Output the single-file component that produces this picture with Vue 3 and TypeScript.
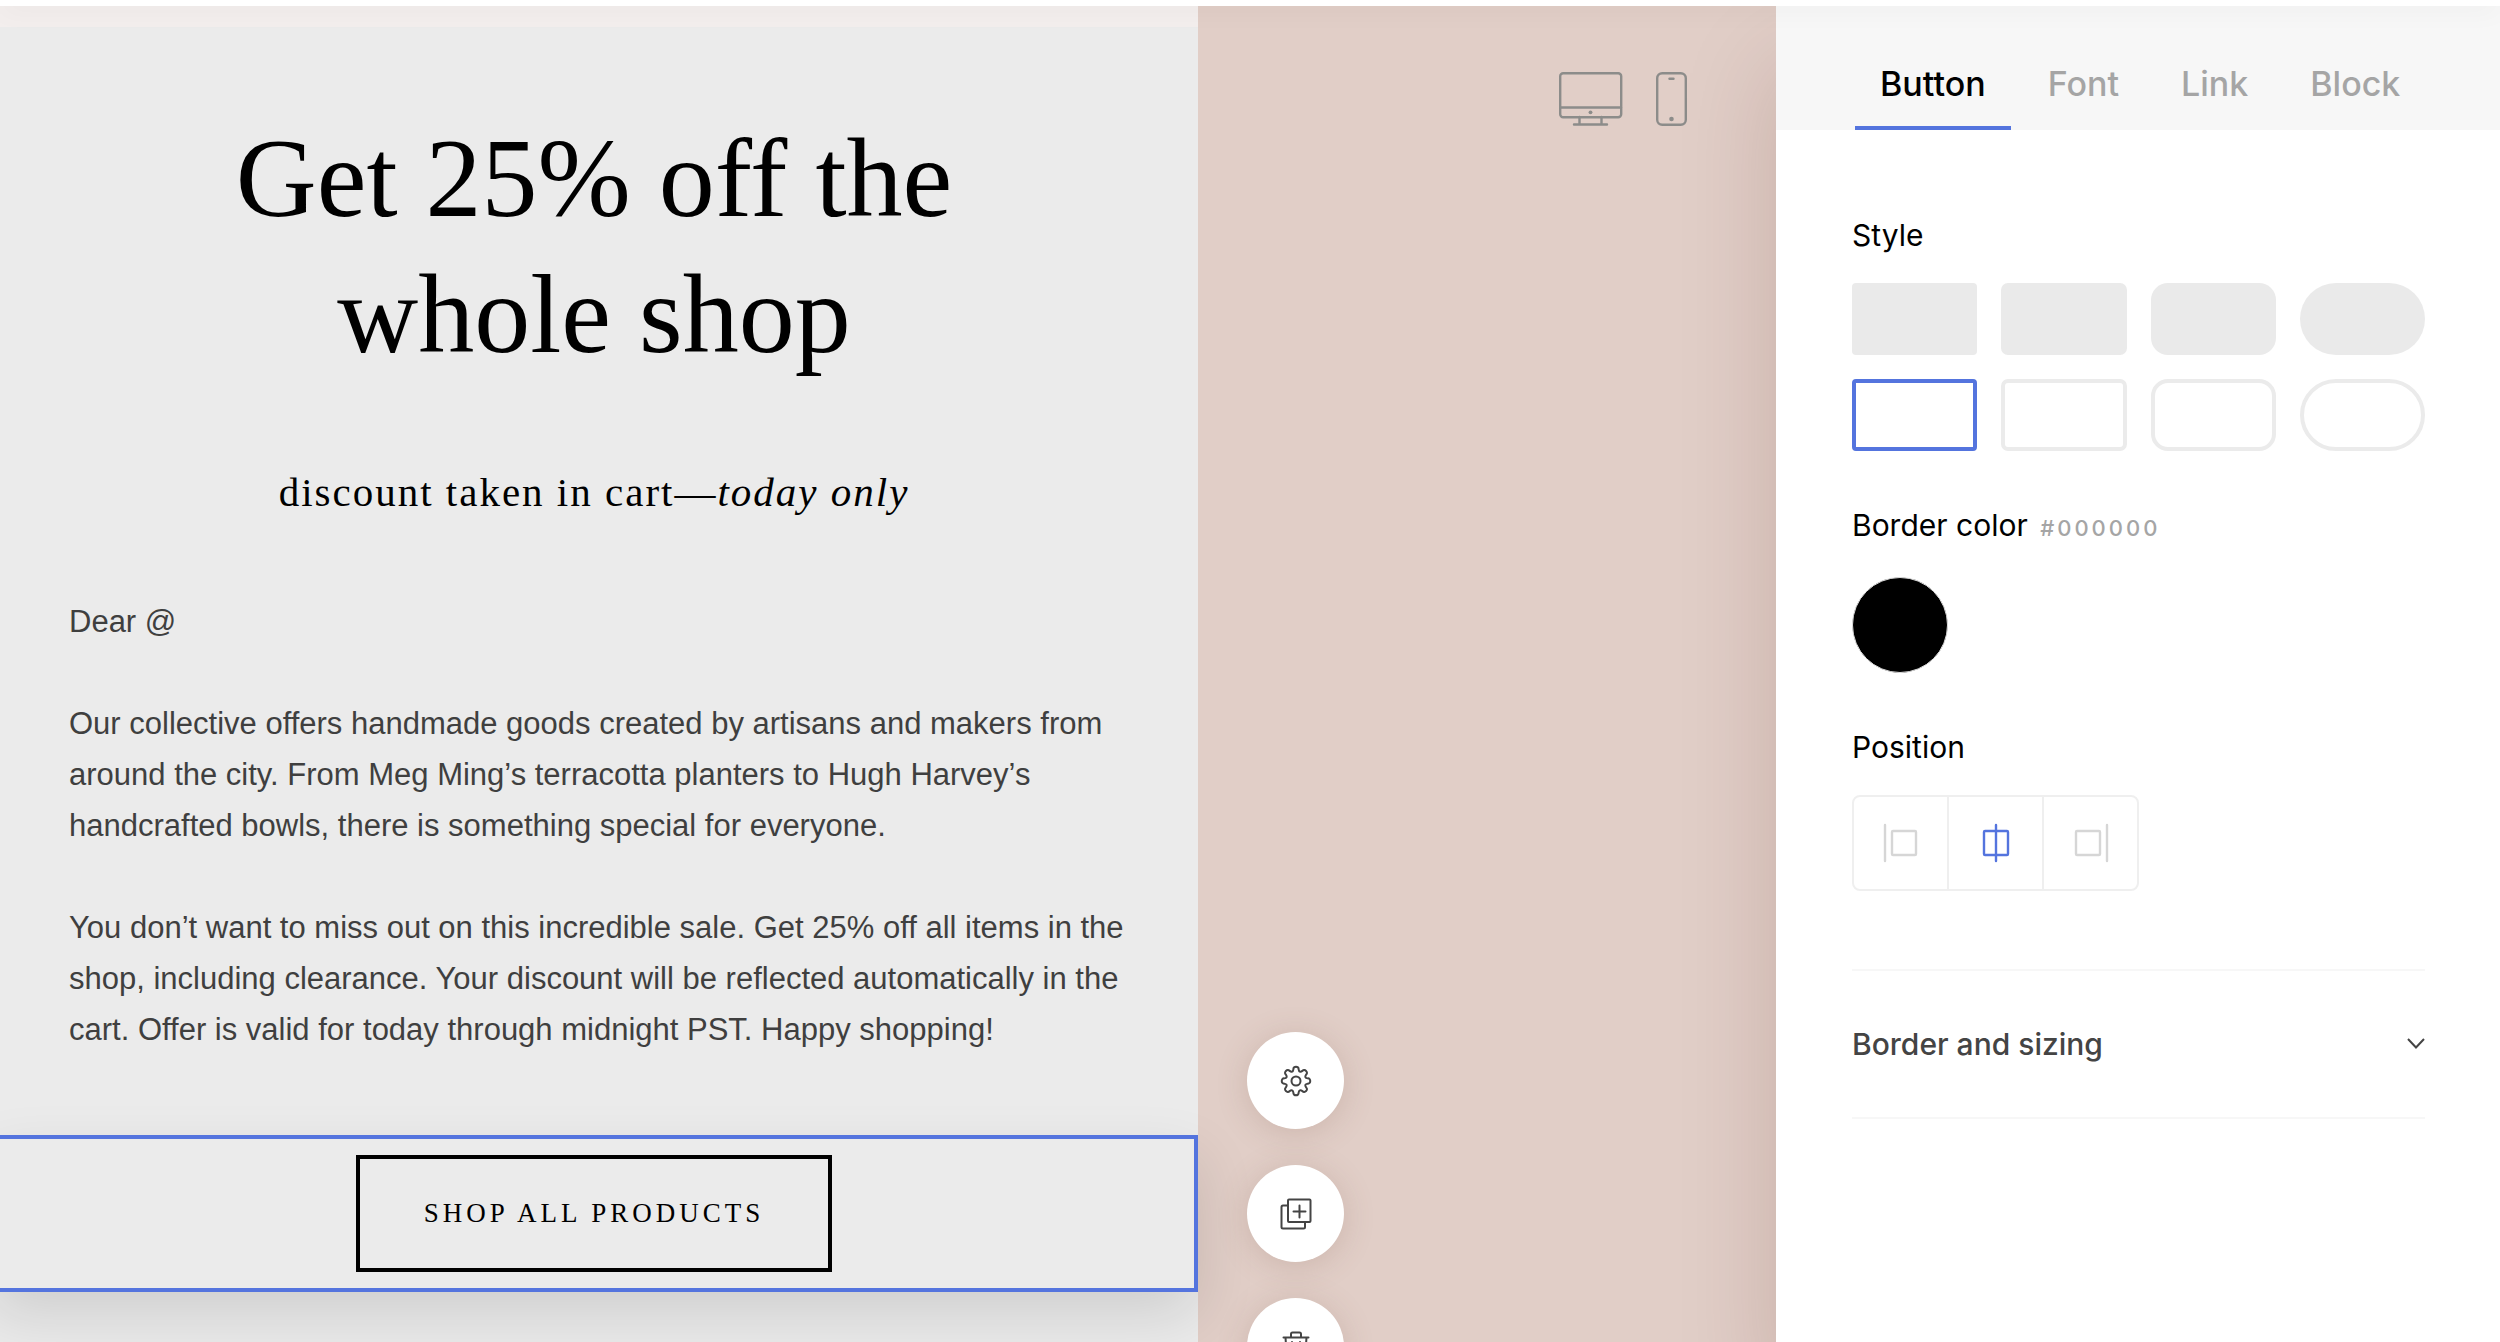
<script setup lang="ts">
import { ref } from 'vue'

const tabs = ['Button', 'Font', 'Link', 'Block']
const activeTab = ref('Button')

const shapes = ['square', 'soft', 'round', 'pill']
const styles = [
  ...shapes.map((shape) => ({ id: `filled-${shape}`, shape, kind: 'filled' })),
  ...shapes.map((shape) => ({ id: `outline-${shape}`, shape, kind: 'outline' })),
]
const activeStyle = ref('outline-square')

const positions = [
  { id: 'left', bar: 4, box: 11 },
  { id: 'center', bar: 20, box: 8 },
  { id: 'right', bar: 36, box: 5 },
]
const activePosition = ref('center')
const borderColor = ref('#000000')

const gearPath = (() => {
  const teeth = 8
  const parts: string[] = []
  const at = (radius: number, angle: number) =>
    `${(16 + radius * Math.cos(angle)).toFixed(2)} ${(16 + radius * Math.sin(angle)).toFixed(2)}`
  for (let i = 0; i < teeth; i++) {
    const a = (i / teeth) * Math.PI * 2 - Math.PI / 2
    parts.push(`${i ? 'L' : 'M'}${at(12, a - 0.22)}`)
    parts.push(`C${at(15.4, a - 0.2)} ${at(15.4, a + 0.2)} ${at(12, a + 0.22)}`)
    parts.push(`C${at(9.6, a + 0.32)} ${at(9.6, a + Math.PI / 4 - 0.32)} ${at(12, a + Math.PI / 4 - 0.22)}`)
  }
  return parts.join('') + 'Z'
})()
</script>

<template>
  <div class="editor">
    <header class="topbar"></header>
    <main class="workspace">
      <section class="email">
        <div class="sheet">
          <h1>Get 25% off the<br />whole shop</h1>
          <p class="subtitle">discount taken in cart—<em>today only</em></p>
          <div class="copy">
            <p>Dear @</p>
            <p>
              Our collective offers handmade goods created by artisans and makers from<br />
              around the city. From Meg Ming’s terracotta planters to Hugh Harvey’s<br />
              handcrafted bowls, there is something special for everyone.
            </p>
            <p>
              You don’t want to miss out on this incredible sale. Get 25% off all items in the<br />
              shop, including clearance. Your discount will be reflected automatically in the<br />
              cart. Offer is valid for today through midnight PST. Happy shopping!
            </p>
          </div>
          <div class="selected-block">
            <a href="#" class="cta">SHOP ALL PRODUCTS</a>
          </div>
        </div>
      </section>

      <section class="gutter">
        <div class="devices">
          <button type="button" aria-label="Desktop preview">
            <svg width="64" height="54" viewBox="0 0 64 54" fill="none" stroke="#8c8c8a" stroke-width="2.400">
              <rect x="1.200" y="1.200" width="61" height="44" rx="3" />
              <path d="M1 35.500H62M20.500 45V51M42.500 45V51M15 52.500H48" stroke-linecap="round" />
              <circle cx="31.500" cy="40.300" r="1.900" fill="#8c8c8a" stroke="none" />
            </svg>
          </button>
          <button type="button" aria-label="Mobile preview">
            <svg width="31" height="54" viewBox="0 0 31 54" fill="none" stroke="#8c8c8a" stroke-width="2.400">
              <rect x="1.200" y="1.200" width="28.600" height="51.600" rx="5" />
              <path d="M13.500 6.700H17.500" stroke-linecap="round" />
              <circle cx="15.500" cy="47" r="2.300" fill="#8c8c8a" stroke="none" />
            </svg>
          </button>
        </div>
        <div class="tools">
          <button type="button" aria-label="Settings">
            <svg width="32" height="32" viewBox="0 0 32 32">
              <path :d="gearPath" />
              <circle cx="16" cy="16" r="4.500" />
            </svg>
          </button>
          <button type="button" aria-label="Duplicate">
            <svg width="32" height="32" viewBox="0 0 32 32">
              <rect x="8" y="1.500" width="22.500" height="22.500" rx="1" />
              <path d="M8 7.500H3Q1.500 7.500 1.500 9V29Q1.500 30.500 3 30.500H23.500Q25 30.500 25 29V24M19.500 7.500V19.500M13.500 13.500H25.500" />
            </svg>
          </button>
          <button type="button" aria-label="Delete">
            <svg width="32" height="32" viewBox="0 0 32 32">
              <path d="M3.500 6.500H28.500M11 6.500V3Q11 1.500 12.500 1.500H19.500Q21 1.500 21 3V6.500M5.500 6.500L7 28Q7 30.500 9.500 30.500H22.500Q25 30.500 25 28L26.500 6.500M12 11V26M20 11V26" />
            </svg>
          </button>
        </div>
      </section>

      <aside class="panel">
        <nav class="tabs">
          <button
            v-for="tab in tabs"
            :key="tab"
            type="button"
            :class="{ active: tab === activeTab }"
            @click="activeTab = tab"
          >{{ tab }}</button>
        </nav>
        <div class="settings">
          <h2>Style</h2>
          <div class="styles">
            <button
              v-for="item in styles"
              :key="item.id"
              type="button"
              :aria-label="item.id"
              :class="[item.shape, item.kind, { active: item.id === activeStyle }]"
              @click="activeStyle = item.id"
            ></button>
          </div>

          <h2>Border color <span class="hex">{{ borderColor }}</span></h2>
          <button type="button" class="color" aria-label="Border color" :style="{ background: borderColor }"></button>

          <h2>Position</h2>
          <div class="positions">
            <button
              v-for="item in positions"
              :key="item.id"
              type="button"
              :aria-label="item.id"
              :class="{ active: item.id === activePosition }"
              @click="activePosition = item.id"
            >
              <svg width="40" height="40" viewBox="0 0 40 40" fill="none" stroke="currentColor" stroke-width="2.400">
                <path :d="`M${item.bar} 2V38`" stroke-linecap="round" />
                <rect :x="item.box" y="8" width="24" height="24" rx="1" />
              </svg>
            </button>
          </div>

          <button type="button" class="accordion">
            Border and sizing
            <svg width="18" height="12" viewBox="0 0 18 12" fill="none" stroke="#444" stroke-width="2">
              <path d="M1 1L9 9.500L17 1" />
            </svg>
          </button>
        </div>
      </aside>
    </main>
  </div>
</template>

<style>
body {
  margin: 0;
}
</style>

<style scoped>
* {
  box-sizing: border-box;
}

button {
  margin: 0;
  padding: 0;
  border: 0;
  background: none;
  font: inherit;
  color: inherit;
  cursor: pointer;
}

svg {
  display: block;
}

.editor {
  display: flex;
  flex-direction: column;
  height: 100vh;
  overflow: hidden;
  background: #e1cec7;
  font-family: Inter, "Liberation Sans", sans-serif;
}

.topbar {
  flex: none;
  height: 6px;
  background: #fff;
  box-shadow: 0 0 28px rgba(0, 0, 0, 0.11);
  position: relative;
  z-index: 5;
}

.workspace {
  flex: 1;
  min-height: 0;
  display: grid;
  grid-template-columns: 1198fr 578fr 724fr;
}

/* Email preview */
.email {
  min-width: 0;
  padding-top: 21px;
  background: #f3eeed;
}

.sheet {
  min-height: 100%;
  margin-left: -10px;
  padding-top: 83px;
  background: #ebebeb;
}

h1 {
  margin: 0;
  font: 400 112px/136px "Liberation Serif", serif;
  text-align: center;
  color: #000;
}

.subtitle {
  margin: 84px 0 0;
  font: 400 41px/52px "Liberation Serif", serif;
  letter-spacing: 2px;
  text-align: center;
  color: #000;
}

.copy {
  padding: 78px 79px 80px;
  font: 400 31px/51px "Liberation Sans", Arial, sans-serif;
  color: #3f3f3f;
  white-space: nowrap;
}

.copy p {
  margin: 0 0 51px;
}

.copy p:last-child {
  margin-bottom: 0;
}

.selected-block {
  display: flex;
  justify-content: center;
  padding: 16px;
  border: 4px solid #5474de;
  background: #ebebeb;
  box-shadow: 0 24px 60px rgba(0, 0, 0, 0.12);
}

.cta {
  padding: 0 64px;
  border: 4px solid #000;
  font: 400 27px/109px "Liberation Serif", serif;
  letter-spacing: 4px;
  color: #000;
  text-decoration: none;
}

/* Canvas gutter */
.gutter {
  position: relative;
}

.devices {
  display: flex;
  justify-content: flex-end;
  gap: 33px;
  padding: 66px 89px 0 0;
}

.tools {
  position: absolute;
  top: 1026px;
  left: 49px;
  display: grid;
  gap: 36px;
}

.tools button {
  display: grid;
  place-items: center;
  width: 97px;
  height: 97px;
  border-radius: 50%;
  background: #fff;
  box-shadow: 0 4px 32px rgba(120, 80, 65, 0.2);
}

.tools svg {
  fill: none;
  stroke: #444;
  stroke-width: 2;
  stroke-linecap: round;
  stroke-linejoin: round;
}

/* Settings panel */
.panel {
  position: relative;
  background: #fff;
  box-shadow: 0 60px 90px rgba(70, 20, 0, 0.17);
}

.tabs {
  display: flex;
  gap: 12px;
  height: 124px;
  padding-left: 79px;
  background: #f7f7f7;
}

.tabs button {
  padding: 34px 25px 0;
  border-bottom: 4px solid transparent;
  font-size: 34px;
  font-weight: 500;
  color: #a5a5a5;
}

.tabs button.active {
  border-color: #5474de;
  color: #000;
}

.settings {
  padding: 85px 75px 0 76px;
}

h2 {
  margin: 0;
  font-size: 30px;
  font-weight: 400;
  line-height: 40px;
  color: #000;
}

.hex {
  margin-left: 4px;
  font-size: 22px;
  font-weight: 500;
  letter-spacing: 3px;
  color: #a5a5a5;
}

.styles {
  display: grid;
  grid-template-columns: repeat(4, 1fr);
  gap: 24px;
  margin: 28px 0 54px;
}

.styles button {
  height: 72px;
  background: #eaeaea;
}

.styles .outline {
  border: 4px solid #ebebeb;
  background: #fff;
}

.styles .square {
  border-radius: 4px;
}

.styles .soft {
  border-radius: 7px;
}

.styles .round {
  border-radius: 17px;
}

.styles .pill {
  border-radius: 36px;
}

.styles .outline.active {
  border-color: #5474de;
}

.color {
  display: block;
  width: 96px;
  height: 96px;
  margin: 29px 0 54px;
  border: 1px solid #ddd;
  border-radius: 50%;
}

.positions {
  display: flex;
  width: fit-content;
  margin: 28px 0 78px;
  border: 2px solid #efefef;
  border-radius: 8px;
}

.positions button {
  display: grid;
  place-items: center;
  width: 93px;
  height: 92px;
  color: #d6d6d6;
}

.positions button + button {
  box-sizing: content-box;
  border-left: 2px solid #efefef;
}

.positions button.active {
  color: #5474de;
}

.accordion {
  display: flex;
  align-items: center;
  justify-content: space-between;
  width: 100%;
  height: 150px;
  border-top: 2px solid #f7f7f7;
  border-bottom: 2px solid #f7f7f7;
  font-size: 30px;
  font-weight: 500;
  color: #444;
}
</style>
